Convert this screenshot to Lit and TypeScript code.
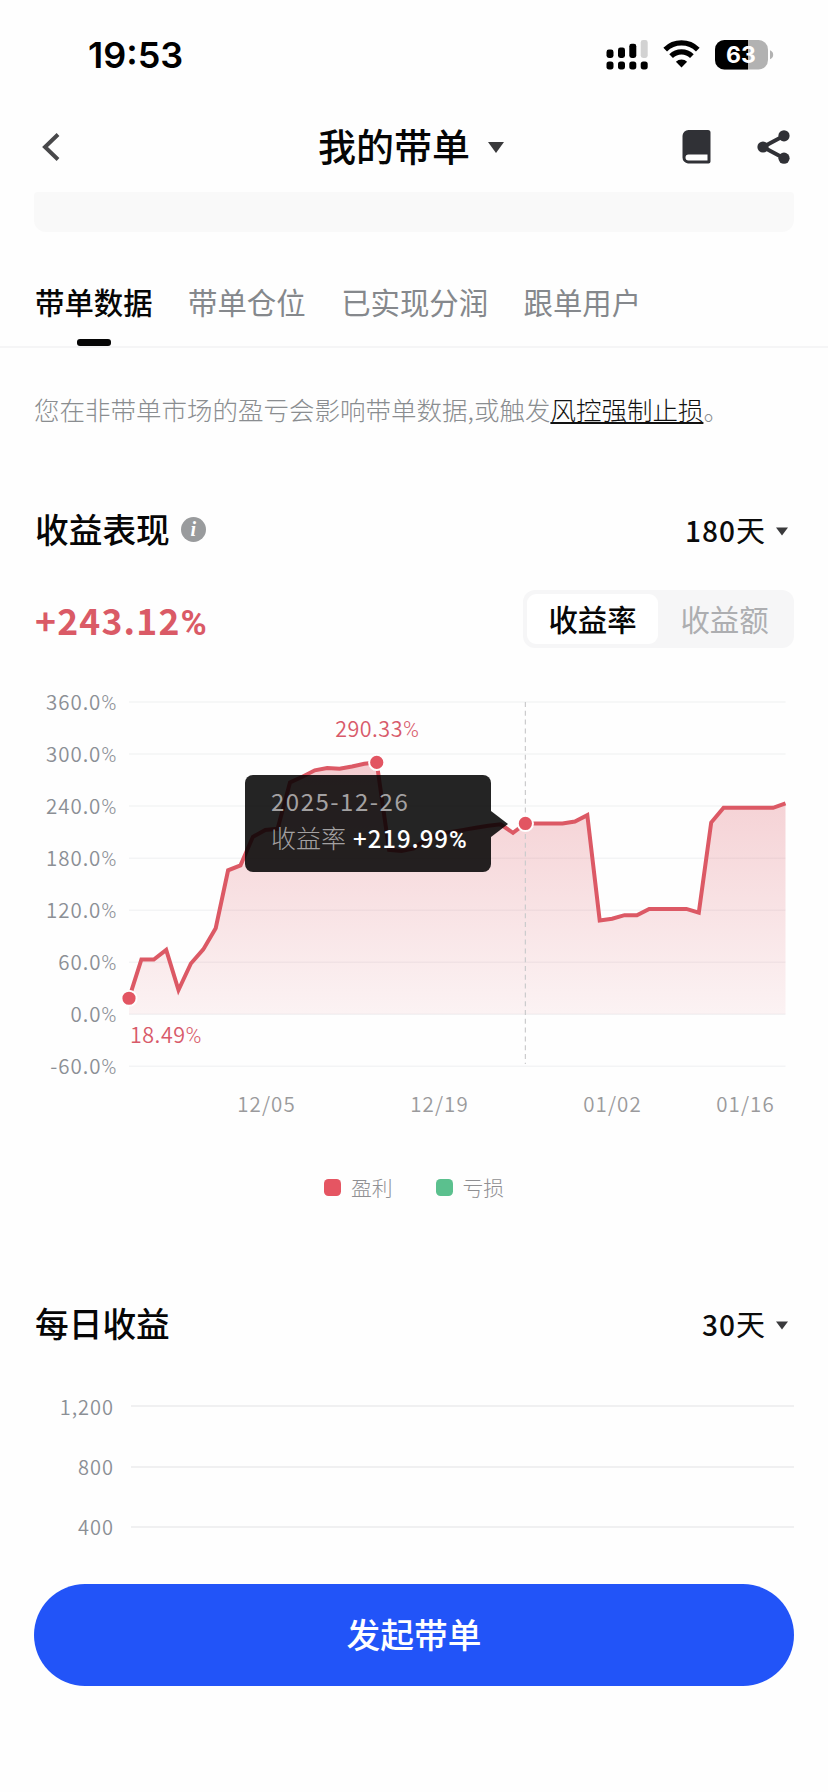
import { LitElement, html, svg, css } from 'lit';
import { customElement, property, state } from 'lit/decorators.js';
import { classMap } from 'lit/directives/class-map.js';

const TABS = ['带单数据', '带单仓位', '已实现分润', '跟单用户'];
const MODES = ['收益率', '收益额'];

// Cumulative return in percent, one value per day
const RETURNS = [
    18.49, 63.2, 63.2, 74.2, 28, 58.6, 74.8, 99.2, 166, 171.7,
    204.6, 212.6, 213.8, 267.2, 273.8, 281.3, 283.8, 283, 285.7, 288.8,
    290.33, 189.6, 188.3, 191.4, 202, 208, 210.3, 212.6, 215, 217.3,
    219, 209.2, 219.99, 219.99, 219.99, 219.99, 222.2, 229.6, 108.1, 110.2,
    114.2, 114.2, 121.5, 121.5, 121.5, 121.5, 117.2, 221.1, 238, 238,
    238, 238, 238, 243.12,
];

const TICKS = [360, 300, 240, 180, 120, 60, 0, -60];
const DATES = [
    { label: '12/05', x: 266.5 },
    { label: '12/19', x: 439.5 },
    { label: '01/02', x: 612.5 },
    { label: '01/16', x: 745.5 },
];

const LEFT = 129;
const RIGHT = 785.5;
const ZERO = 354.3;
const px = (i: number) => LEFT + (i * (RIGHT - LEFT)) / (RETURNS.length - 1);
const py = (v: number) => ZERO - v * 0.8675;

@customElement('return-chart')
export class ReturnChart extends LitElement {
    static override styles = css`
    :host {
      display: block;
      position: relative;
      height: 480px;
    }
    svg {
      display: block;
    }
    text {
      font-family: "Noto Sans CJK SC", sans-serif;
      font-size: 20.5px;
      font-weight: 350;
      letter-spacing: 0.95px;
      fill: #8b8f95;
    }
    .pct {
      font-family: Roboto, sans-serif;
      letter-spacing: 0;
    }
    .date {
      letter-spacing: 1.1px;
      fill: #9a9a9c;
    }
    .value {
      font-size: 21.5px;
      letter-spacing: 0.5px;
      fill: #d85a6a;
    }
    .grid {
      stroke: #f3f4f5;
      stroke-width: 1.5;
    }
    .cursor {
      stroke: #cbcbcd;
      stroke-width: 1.2;
      stroke-dasharray: 5 3.8;
    }
    .line {
      fill: none;
      stroke: #dc5965;
      stroke-width: 4;
    }
    .dot {
      fill: #e25562;
      stroke: #fefefe;
      stroke-width: 2;
    }
    .tooltip {
      position: absolute;
      left: 245px;
      top: 115px;
      width: 246px;
      height: 97px;
      box-sizing: border-box;
      padding: 8px 0 0 26px;
      border-radius: 8px;
      background: rgba(0, 0, 0, 0.86);
      color: #a3a1a2;
      font-size: 25px;
      font-weight: 300;
      line-height: 36px;
      white-space: nowrap;
    }
    .tooltip::after {
      content: "";
      position: absolute;
      left: 246px;
      top: 36px;
      border: solid transparent;
      border-width: 13px 0 13px 17px;
      border-left-color: rgba(0, 0, 0, 0.86);
    }
    .day {
      font-size: 24px;
      font-weight: 400;
      letter-spacing: 1.5px;
    }
    .rate {
      margin-left: 7px;
      color: #fff;
      font-size: 24px;
      font-weight: 500;
      letter-spacing: 0.95px;
    }
  `;

    private _dot(index: number) {
        return svg`<circle class="dot" cx=${px(index)} cy=${py(RETURNS[index])} r="7.6" />`;
    }

    override render() {
        const points = RETURNS.map((v, i) => `${px(i).toFixed(1)},${py(v).toFixed(1)}`).join(' ');
        return html`
      <svg width="828" height="480" viewBox="0 0 828 480">
        <defs>
          <linearGradient id="fill" x1="0" y1="0" x2="0" y2="1">
            <stop offset="0" stop-color="#dc5965" stop-opacity="0.3" />
            <stop offset="1" stop-color="#dc5965" stop-opacity="0.07" />
          </linearGradient>
        </defs>
        ${TICKS.map(t => svg`
          <line class="grid" x1=${LEFT} x2=${RIGHT} y1=${py(t)} y2=${py(t)} />
          <text x="116.5" y=${py(t) + 8} text-anchor="end">${t.toFixed(1)}<tspan class="pct">%</tspan></text>
        `)}
        <polygon fill="url(#fill)" points="${LEFT},${ZERO} ${points} ${RIGHT},${ZERO}" />
        <line class="cursor" x1=${px(32)} x2=${px(32)} y1="42" y2="404" />
        <polyline class="line" points=${points} />
        ${[0, 20, 32].map(i => this._dot(i))}
        <text class="value" x="377" y="77" text-anchor="middle">290.33<tspan class="pct">%</tspan></text>
        <text class="value" x="130" y="383">18.49<tspan class="pct">%</tspan></text>
        ${DATES.map(d => svg`<text class="date" x=${d.x} y="452" text-anchor="middle">${d.label}</text>`)}
      </svg>
      <div class="tooltip">
        <div class="day">2025-12-26</div>
        <div>收益率<span class="rate">+219.99<span class="pct">%</span></span></div>
      </div>
    `;
    }
}

@customElement('range-picker')
export class RangePicker extends LitElement {
    static override styles = css`
    :host {
      display: flex;
      align-items: center;
      gap: 11px;
      padding-right: 6px;
      font-size: 29px;
      color: #0b0b0b;
    }
    .label {
      padding-bottom: 3px;
    }
    .days {
      font-size: 28px;
      font-weight: 450;
      letter-spacing: 1px;
    }
    svg {
      margin-top: 3px;
    }
  `;

    @property({ type: Number })
    days: number = 30;

    override render() {
        return html`
      <span class="label"><span class="days">${this.days}</span>天</span>
      <svg width="12" height="9" viewBox="0 0 12 9"><path d="M0 0.5h12L6 8.5z" fill="#3a3a3c" /></svg>
    `;
    }
}

@customElement('app-root')
export class AppRoot extends LitElement {
    static override styles = css`
    :host {
      display: flex;
      flex-direction: column;
      width: 828px;
      height: 1792px;
      overflow: hidden;
      background: #fefefe;
      color: #060606;
      font-family: "Noto Sans CJK SC", sans-serif;
    }
    .status {
      display: flex;
      align-items: center;
      height: 110px;
      padding: 0 54px 0 88px;
    }
    .time {
      flex: 1;
      font: 600 36px/1 Inter, sans-serif;
      color: #000;
    }
    .battery-text {
      font: 700 23px Inter, sans-serif;
      fill: #fff;
    }
    .header {
      display: grid;
      grid-template-columns: 1fr auto 1fr;
      align-items: center;
      height: 74px;
      padding: 0 38px 0 41px;
    }
    .title {
      display: flex;
      align-items: center;
      gap: 18px;
      margin-right: 9px;
      font-size: 38px;
      font-weight: 500;
      line-height: 50px;
    }
    .title-text {
      padding-bottom: 4px;
    }
    .actions {
      display: flex;
      justify-content: flex-end;
      align-items: center;
      gap: 46px;
    }
    .banner {
      height: 40px;
      margin: 8px 34px 0;
      border-radius: 4px 4px 12px 12px;
      background: #f9f9f9;
    }
    .tabs {
      display: flex;
      align-items: flex-end;
      gap: 35.5px;
      height: 114px;
      padding: 0 35px;
      border-bottom: 2px solid #f5f5f6;
    }
    .tab {
      display: flex;
      flex-direction: column;
      align-items: center;
      gap: 16px;
      font-size: 29.4px;
      line-height: 44px;
      color: #85888c;
    }
    .tab::after {
      content: "";
      width: 34px;
      height: 7px;
      border-radius: 3px;
    }
    .tab.active {
      color: #060606;
      font-weight: 500;
    }
    .tab.active::after {
      background: #060606;
    }
    .notice {
      margin: 43px 34px 0;
      padding-bottom: 2px;
      font-size: 25.5px;
      font-weight: 300;
      line-height: 36px;
      white-space: nowrap;
      color: #8a8d90;
    }
    .rule {
      color: #111;
      text-decoration: underline;
      text-decoration-thickness: 2px;
      text-underline-offset: 2px;
      text-decoration-skip-ink: none;
    }
    .section-head {
      display: flex;
      justify-content: space-between;
      align-items: center;
      height: 48px;
      margin: 77px 34px 0;
    }
    .section-head.daily {
      margin-top: 98px;
    }
    .section-title {
      display: flex;
      align-items: center;
      gap: 11px;
      padding-left: 1px;
      font-size: 33.7px;
      font-weight: 500;
    }
    .section-text {
      padding-bottom: 3px;
    }
    .info {
      width: 25px;
      height: 25px;
      margin-bottom: 1px;
      border-radius: 50%;
      background: #999b9d;
      color: #fff;
      font: italic 700 20px/24px "Liberation Serif", serif;
      text-align: center;
    }
    .summary {
      display: flex;
      justify-content: space-between;
      align-items: center;
      height: 58px;
      margin: 36px 34px 12px;
    }
    .total {
      padding-left: 1px;
      font-size: 35.5px;
      font-weight: 700;
      letter-spacing: 1.2px;
      color: #da5a66;
    }
    .total .pct {
      font-family: Roboto, sans-serif;
    }
    .switch {
      display: flex;
      gap: 1px;
      width: 271px;
      height: 58px;
      box-sizing: border-box;
      padding: 4px;
      border-radius: 12px;
      background: #f6f6f7;
    }
    .mode {
      flex: 1;
      border-radius: 9px;
      font-size: 29.4px;
      line-height: 48px;
      text-align: center;
      color: #adaeb1;
    }
    .mode.active {
      background: #fff;
      color: #060606;
      font-weight: 500;
    }
    .legend {
      display: flex;
      justify-content: center;
      gap: 43px;
      height: 30px;
      margin-top: 32px;
      font-size: 20.8px;
      font-weight: 300;
      color: #8f8f92;
    }
    .legend-item {
      display: flex;
      align-items: center;
      gap: 10px;
    }
    .legend-text {
      padding-bottom: 1px;
    }
    .swatch {
      width: 17px;
      height: 17px;
      border-radius: 4.5px;
    }
    .profit {
      background: #e55562;
    }
    .loss {
      background: #5bc08e;
    }
    .rows {
      margin: 28px 34px 0 0;
    }
    .row {
      display: grid;
      grid-template-columns: 114px 1fr;
      align-items: center;
      column-gap: 17px;
      height: 60.4px;
      font-size: 20px;
      font-weight: 350;
      letter-spacing: 1px;
      text-align: right;
      color: #8b8f95;
    }
    .row::after {
      content: "";
      height: 2px;
      background: #f0f0f1;
    }
    .submit {
      height: 102px;
      margin: 27px 34px 0;
      padding: 0 0 4px;
      border: none;
      border-radius: 51px;
      background: #2254f8;
      color: #fff;
      font: 500 33.7px "Noto Sans CJK SC", sans-serif;
    }
  `;

    @state()
    private _tab = 0;

    @state()
    private _mode = 0;

    private _renderStatus() {
        return html`
      <div class="status">
        <span class="time">19:53</span>
        <svg width="168" height="32" viewBox="0 0 168 32">
          <g transform="translate(0.5 1)">
            <rect x="0" y="9.5" width="7" height="8.5" rx="2.4" />
            <rect x="11.5" y="7.5" width="7" height="10.5" rx="2.4" />
            <rect x="22.8" y="3.8" width="7" height="14.2" rx="2.4" />
            <rect x="34.2" y="0" width="7" height="18" rx="2.4" fill="#d2d2d2" />
            <rect x="0" y="21.4" width="7" height="8" rx="2.6" />
            <rect x="11.5" y="21.4" width="7" height="8" rx="2.6" />
            <rect x="22.8" y="21.4" width="7" height="8" rx="2.6" />
            <rect x="34.2" y="21.4" width="7" height="8" rx="2.6" />
          </g>
          <g transform="translate(57.5 2)" fill="none" stroke="#000" stroke-width="5.2">
            <path d="M1.7 8.6a23.2 23.2 0 0 1 32.6 0" />
            <path d="M7.6 15.2a14.8 14.8 0 0 1 20.800 0" />
            <path d="M12.4 20.8a7.9 7.9 0 0 1 11.200 0L18 26.400z" fill="#000" stroke="none" />
          </g>
          <g transform="translate(109 1)">
            <clipPath id="level"><rect width="33" height="30" /></clipPath>
            <rect width="53" height="29.5" rx="9.5" fill="#b2b2b2" />
            <rect width="53" height="29.5" rx="9.5" clip-path="url(#level)" />
            <path d="M55 10.3c2 .8 3.2 2.5 3.2 4.5s-1.2 3.7-3.2 4.500z" fill="#b2b2b2" />
            <text class="battery-text" x="26" y="23.4" text-anchor="middle">63</text>
          </g>
        </svg>
      </div>
    `;
    }

    private _renderHeader() {
        return html`
      <div class="header">
        <svg width="20" height="30" viewBox="0 0 20 30">
          <path d="M17 2.5L4 15l13 12.5" fill="none" stroke="#48484a" stroke-width="4" />
        </svg>
        <div class="title">
          <span class="title-text">我的带单</span>
          <svg width="16" height="11" viewBox="0 0 16 11"><path d="M0 0h16L8 11z" fill="#3a3a3c" /></svg>
        </div>
        <div class="actions">
          <svg width="29" height="34" viewBox="0 0 29 34">
            <path
              d="M6.5 0H26a2.5 2.5 0 0 1 2.5 2.5V31.5a2 2 0 0 1-2 2H6A6 6 0 0 1 .5 27.5V6A6 6 0 0 1 6.5 0zM6.5 24.5a3 3 0 0 0 0 6H25.5v-6z"
              fill="#303136" fill-rule="evenodd"
            />
          </svg>
          <svg width="33" height="34" viewBox="0 0 33 34">
            <path d="M27 5.8L6 17l21 11.2" fill="none" stroke="#303136" stroke-width="4" />
            <circle cx="6" cy="17" r="5.6" fill="#303136" />
            <circle cx="27" cy="5.8" r="5.6" fill="#303136" />
            <circle cx="27" cy="28.2" r="5.6" fill="#303136" />
          </svg>
        </div>
      </div>
    `;
    }

    override render() {
        return html`
      ${this._renderStatus()}
      ${this._renderHeader()}
      <div class="banner"></div>
      <div class="tabs">
        ${TABS.map((label, i) => html`
          <div class=${classMap({ tab: true, active: i === this._tab })} @click=${() => { this._tab = i; }}>${label}</div>
        `)}
      </div>
      <div class="notice">您在非带单市场的盈亏会影响带单数据,或触发<span class="rule">风控强制止损</span>。</div>

      <div class="section-head">
        <div class="section-title"><span class="section-text">收益表现</span><span class="info">i</span></div>
        <range-picker .days=${180}></range-picker>
      </div>
      <div class="summary">
        <div class="total">+243.12<span class="pct">%</span></div>
        <div class="switch">
          ${MODES.map((label, i) => html`
            <div class=${classMap({ mode: true, active: i === this._mode })} @click=${() => { this._mode = i; }}>${label}</div>
          `)}
        </div>
      </div>
      <return-chart></return-chart>
      <div class="legend">
        <div class="legend-item"><span class="swatch profit"></span><span class="legend-text">盈利</span></div>
        <div class="legend-item"><span class="swatch loss"></span><span class="legend-text">亏损</span></div>
      </div>

      <div class="section-head daily">
        <div class="section-title"><span class="section-text">每日收益</span></div>
        <range-picker .days=${30}></range-picker>
      </div>
      <div class="rows">
        ${['1,200', '800', '400'].map(label => html`<div class="row">${label}</div>`)}
      </div>
      <button class="submit">发起带单</button>
    `;
    }
}
